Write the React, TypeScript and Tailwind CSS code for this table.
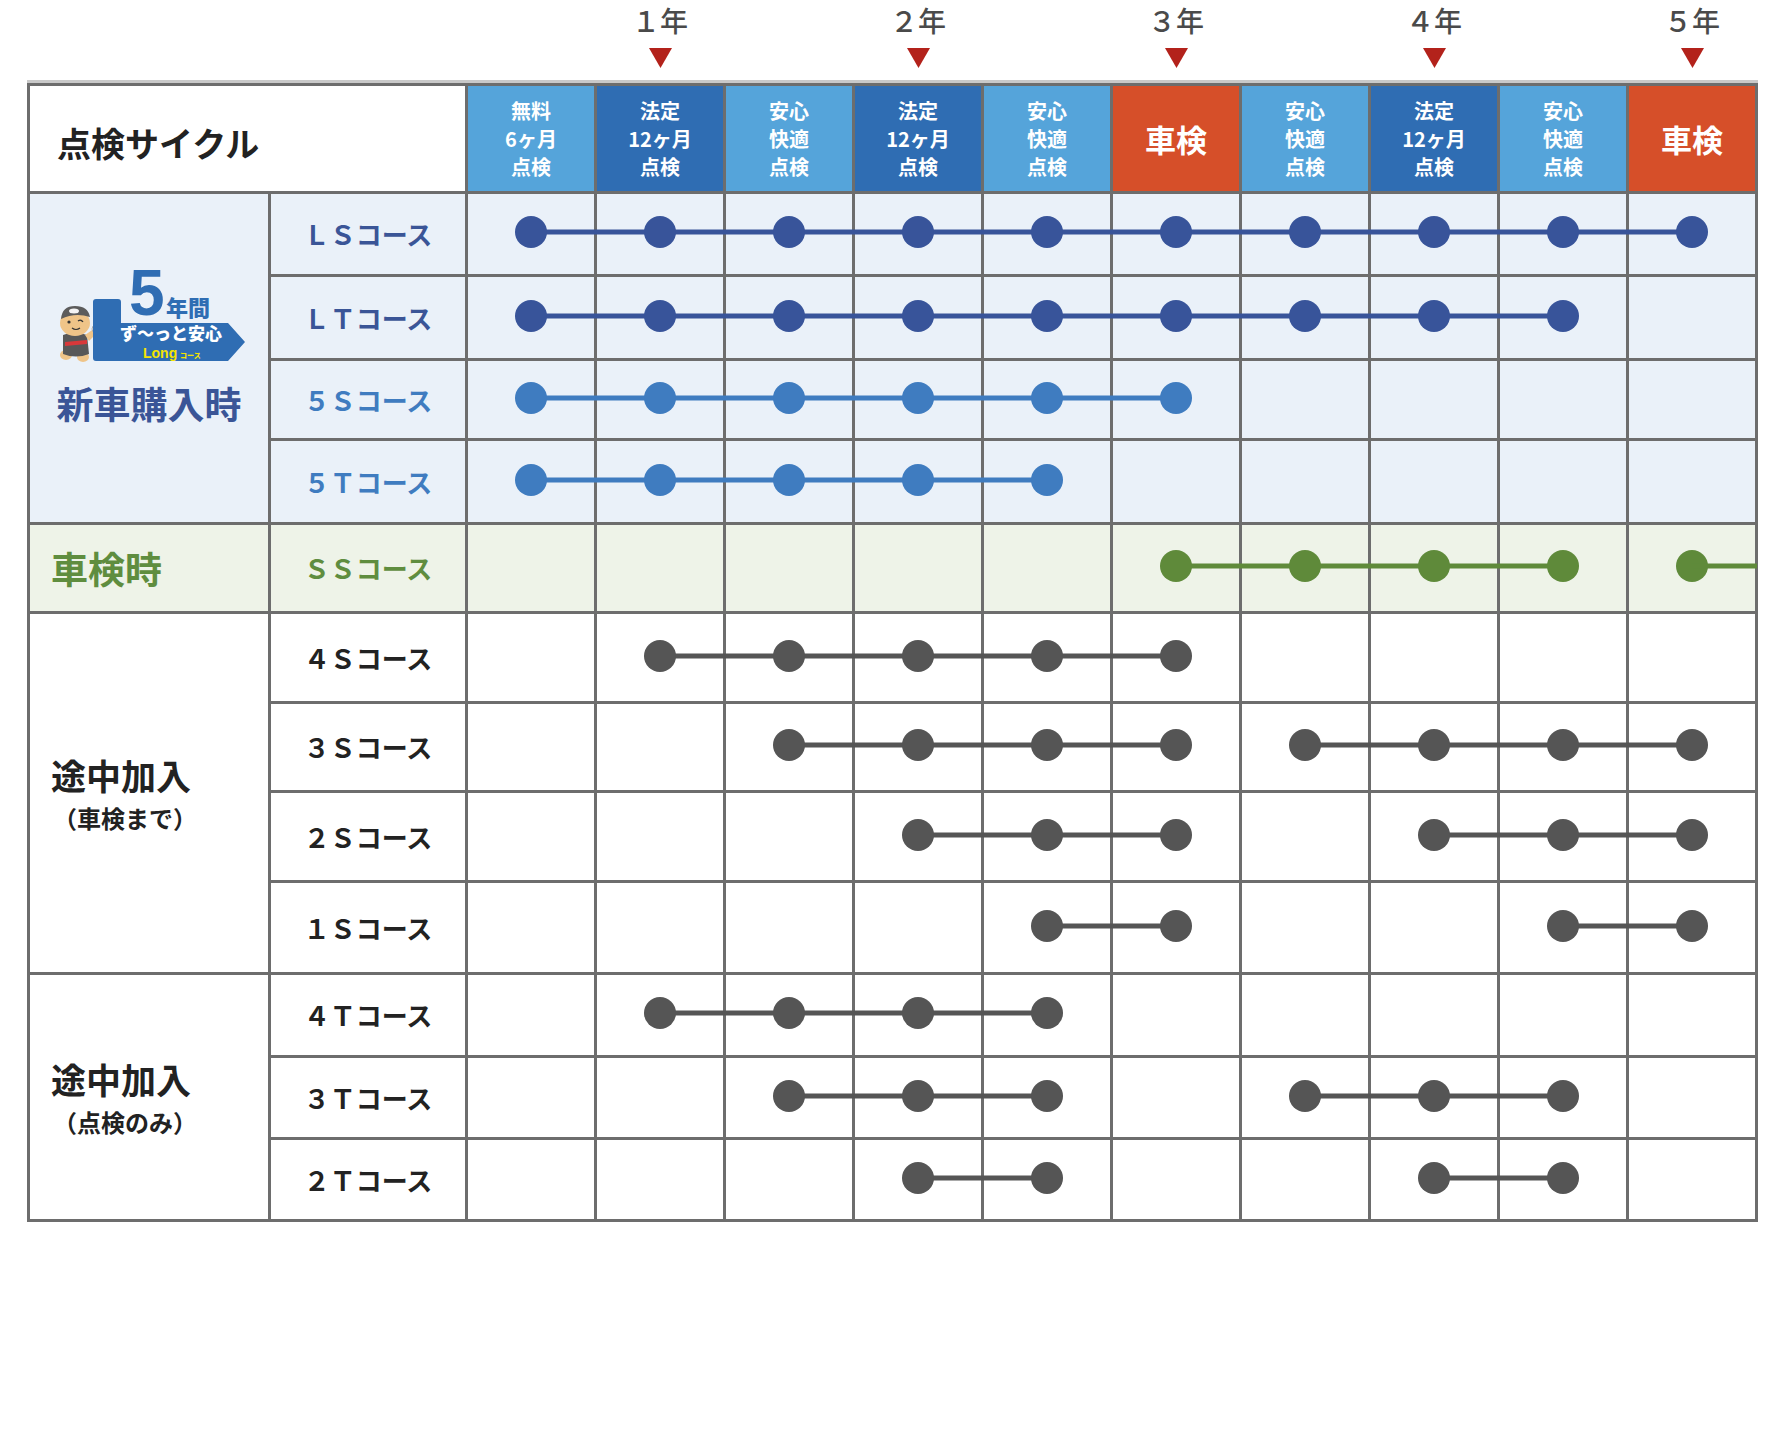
import React from "react";

// grid pitch: 126px cell + 3px line
const PITCH = 129;
const CELL = 126;

type Seg = [number, number];
type Tone = "navy" | "blue" | "green" | "gray";

type Course = {
  label: string;
  tone: Tone;
  segs: Seg[];
  tail?: boolean;
};

const TONE = {
  navy: { text: "text-[#3a5597]", dot: "#38549a", bg: "bg-[#eaf1f9]" },
  blue: { text: "text-[#3f7cc0]", dot: "#3f7cc0", bg: "bg-[#eaf1f9]" },
  green: { text: "text-[#5f8d3f]", dot: "#5f8a3a", bg: "bg-[#eef3e8]" },
  gray: { text: "text-[#222]", dot: "#555555", bg: "bg-white" },
};

const HEAD: { kind: "light" | "dark" | "shaken"; lines: string[] }[] = [
  { kind: "light", lines: ["無料", "6ヶ月", "点検"] },
  { kind: "dark", lines: ["法定", "12ヶ月", "点検"] },
  { kind: "light", lines: ["安心", "快適", "点検"] },
  { kind: "dark", lines: ["法定", "12ヶ月", "点検"] },
  { kind: "light", lines: ["安心", "快適", "点検"] },
  { kind: "shaken", lines: ["車検"] },
  { kind: "light", lines: ["安心", "快適", "点検"] },
  { kind: "dark", lines: ["法定", "12ヶ月", "点検"] },
  { kind: "light", lines: ["安心", "快適", "点検"] },
  { kind: "shaken", lines: ["車検"] },
];

const HEAD_BG = {
  light: "bg-[#55a4da]",
  dark: "bg-[#2f6db3]",
  shaken: "bg-[#d64f29]",
};

const YEARS: Record<number, string> = { 1: "１年", 3: "２年", 5: "３年", 7: "４年", 9: "５年" };

const NEW_CAR: Course[] = [
  { label: "ＬＳコース", tone: "navy", segs: [[0, 9]] },
  { label: "ＬＴコース", tone: "navy", segs: [[0, 8]] },
  { label: "５Ｓコース", tone: "blue", segs: [[0, 5]] },
  { label: "５Ｔコース", tone: "blue", segs: [[0, 4]] },
];

const SHAKEN: Course = { label: "ＳＳコース", tone: "green", segs: [[5, 8], [9, 9]], tail: true };

const MID_S: Course[] = [
  { label: "４Ｓコース", tone: "gray", segs: [[1, 5]] },
  { label: "３Ｓコース", tone: "gray", segs: [[2, 5], [6, 9]] },
  { label: "２Ｓコース", tone: "gray", segs: [[3, 5], [7, 9]] },
  { label: "１Ｓコース", tone: "gray", segs: [[4, 5], [8, 9]] },
];

const MID_T: Course[] = [
  { label: "４Ｔコース", tone: "gray", segs: [[1, 4]] },
  { label: "３Ｔコース", tone: "gray", segs: [[2, 4], [6, 8]] },
  { label: "２Ｔコース", tone: "gray", segs: [[3, 4], [7, 8]] },
];

const cx = (i: number) => i * PITCH + CELL / 2;

function Timeline({ course }: { course: Course }) {
  const t = TONE[course.tone];
  const width = PITCH * 10 - 3;
  return (
    <div className="relative grid grid-cols-10 gap-[3px]">
      {Array.from({ length: 10 }).map((_, i) => (
        <div key={i} className={t.bg} />
      ))}
      <svg
        className="absolute left-0 top-1/2 -translate-y-1/2 -mt-[2px] overflow-visible"
        width={width}
        height={40}
      >
        {course.segs.map(([a, b], k) => (
          <g key={k}>
            {b > a && <line x1={cx(a)} x2={cx(b)} y1={20} y2={20} stroke={t.dot} strokeWidth={5} />}
            {Array.from({ length: b - a + 1 }).map((_, j) => (
              <circle key={j} cx={cx(a + j)} cy={20} r={16} fill={t.dot} />
            ))}
          </g>
        ))}
        {course.tail && (
          <line x1={cx(9)} x2={width + 2} y1={20} y2={20} stroke={t.dot} strokeWidth={5} />
        )}
      </svg>
    </div>
  );
}

function CourseRow({ course }: { course: Course }) {
  const t = TONE[course.tone];
  return (
    <>
      <div className={`col-start-2 flex items-center justify-center ${t.bg}`}>
        <span className={`text-[26px] font-bold leading-none ${t.text}`}>{course.label}</span>
      </div>
      <Timeline course={course} />
    </>
  );
}

const CJK = "'Noto Sans CJK JP', sans-serif";

function LongLogo() {
  return (
    <svg width={195} height={109} viewBox="0 -14 195 109">
      {/* mascot */}
      <g>
        <ellipse cx={14} cy={87} rx={6} ry={5} fill="#efc488" />
        <ellipse cx={31} cy={89} rx={6} ry={5} fill="#efc488" />
        <path d="M11 67 Q22 62 35 67 L37 86 Q24 91 11 86 Z" fill="#585858" />
        <path d="M13 74 L35 72 L35 76 L13 78 Z" fill="#d8383a" />
        <path d="M33 67 L43 60 L46 64 L37 73 Z" fill="#efc488" />
        <circle cx={44} cy={61} r={4} fill="#f4f4f4" stroke="#9a9a9a" strokeWidth={0.8} />
        <ellipse cx={23} cy={55} rx={15} ry={13} fill="#efc488" />
        <path d="M9 51 Q10 38 23 38 Q36 38 38 49 Q23 44 9 51 Z" fill="#5c5c5c" />
        <ellipse cx={22} cy={43} rx={5} ry={2.5} fill="#f4f4f4" />
        <circle cx={17} cy={54} r={1.6} fill="#333" />
        <path d="M26 53 Q29 51 31 54" stroke="#333" strokeWidth={1.3} fill="none" />
        <path d="M20 60 Q24 63 28 60" stroke="#333" strokeWidth={1.2} fill="none" />
      </g>
      {/* badge */}
      <path d="M41 34 Q41 31 44 31 L66 31 Q69 31 69 34 L69 55 L176 55 L193 74 L176 93 L44 93 Q41 93 41 90 Z" fill="#2f6db3" />
      <text x={77} y={47} fontSize={64} fontWeight={700} fill="#2f6db3" fontFamily="'Liberation Sans', sans-serif">
        5
      </text>
      <text x={114} y={48} fontSize={22} fontWeight={900} fill="#2f6db3" fontFamily={CJK}>
        年間
      </text>
      <text x={68} y={72} fontSize={17} fontWeight={900} fill="#ffffff" fontFamily={CJK}>
        ず〜っと安心
      </text>
      <text x={91} y={90} fontSize={14} fontWeight={700} fill="#f5e400" fontFamily="'Liberation Sans', sans-serif">
        Long
      </text>
      <text x={128} y={90} fontSize={7} fontWeight={900} fill="#f5e400" fontFamily={CJK}>
        コース
      </text>
    </svg>
  );
}

function MidJoin({ note, span }: { note: string; span: string }) {
  return (
    <div className={`${span} flex flex-col justify-center bg-white pl-[21px]`}>
      <span className="text-[35px] font-bold leading-[1.45] text-[#222]">途中加入</span>
      <span className="pl-[2px] text-[24px] font-bold leading-[1.45] text-[#222]">{note}</span>
    </div>
  );
}

export default function App() {
  return (
    <div className="min-h-[1454px] w-[1770px] bg-white font-['Noto_Sans_CJK_JP','Noto_Sans',sans-serif]">
      {/* year markers */}
      <div className="ml-[468px] grid h-[80px] grid-cols-[repeat(10,126px)] gap-x-[3px]">
        {Array.from({ length: 10 }).map((_, i) => (
          <div key={i} className="flex flex-col items-center">
            {YEARS[i] && (
              <>
                <span className="pt-[6px] text-[28px] font-medium leading-none text-[#4a4a4a]">{YEARS[i]}</span>
                <svg className="mt-[14px]" width={23} height={20} viewBox="0 0 23 20">
                  <polygon points="0,0 23,0 11.5,20" fill="#b3221b" />
                </svg>
              </>
            )}
          </div>
        ))}
      </div>

      <div className="ml-[27px] w-[1731px]">
        <div className="h-[3px] bg-[#c9c9c9]" />
        <div className="grid grid-cols-[238px_194px_1287px] grid-rows-[105px_80px_81px_77px_81px_86px_87px_86px_87px_89px_80px_79px_79px] gap-[3px] bg-[#6d6d6d] p-[3px]">
          {/* header */}
          <div className="col-span-2 flex items-center bg-white pl-[27px] pt-[8px]">
            <span className="text-[34px] font-bold leading-none text-[#222]">点検サイクル</span>
          </div>
          <div className="grid grid-cols-10 gap-[3px]">
            {HEAD.map((h, i) => (
              <div key={i} className={`flex flex-col items-center justify-center text-white ${HEAD_BG[h.kind]}`}>
                {h.kind === "shaken" ? (
                  <span className="text-[31px] font-bold leading-none">{h.lines[0]}</span>
                ) : (
                  h.lines.map((l) => (
                    <span key={l} className="text-[20px] font-bold leading-[28px]">
                      {l}
                    </span>
                  ))
                )}
              </div>
            ))}
          </div>

          {/* new car */}
          <div className="row-span-4 flex flex-col items-center justify-center bg-[#eaf1f9] pb-[36px]">
            <LongLogo />
            <span className="mt-[18px] text-[37px] font-bold leading-[1.2] text-[#3a5597]">新車購入時</span>
          </div>
          {NEW_CAR.map((c) => (
            <CourseRow key={c.label} course={c} />
          ))}

          {/* shaken */}
          <div className="flex items-center bg-[#eef3e8] pl-[21px]">
            <span className="text-[37px] font-bold leading-none text-[#5f8d3f]">車検時</span>
          </div>
          <CourseRow course={SHAKEN} />

          <MidJoin note="（車検まで）" span="row-span-4" />
          {MID_S.map((c) => (
            <CourseRow key={c.label} course={c} />
          ))}

          <MidJoin note="（点検のみ）" span="row-span-3" />
          {MID_T.map((c) => (
            <CourseRow key={c.label} course={c} />
          ))}
        </div>
      </div>
    </div>
  );
}
